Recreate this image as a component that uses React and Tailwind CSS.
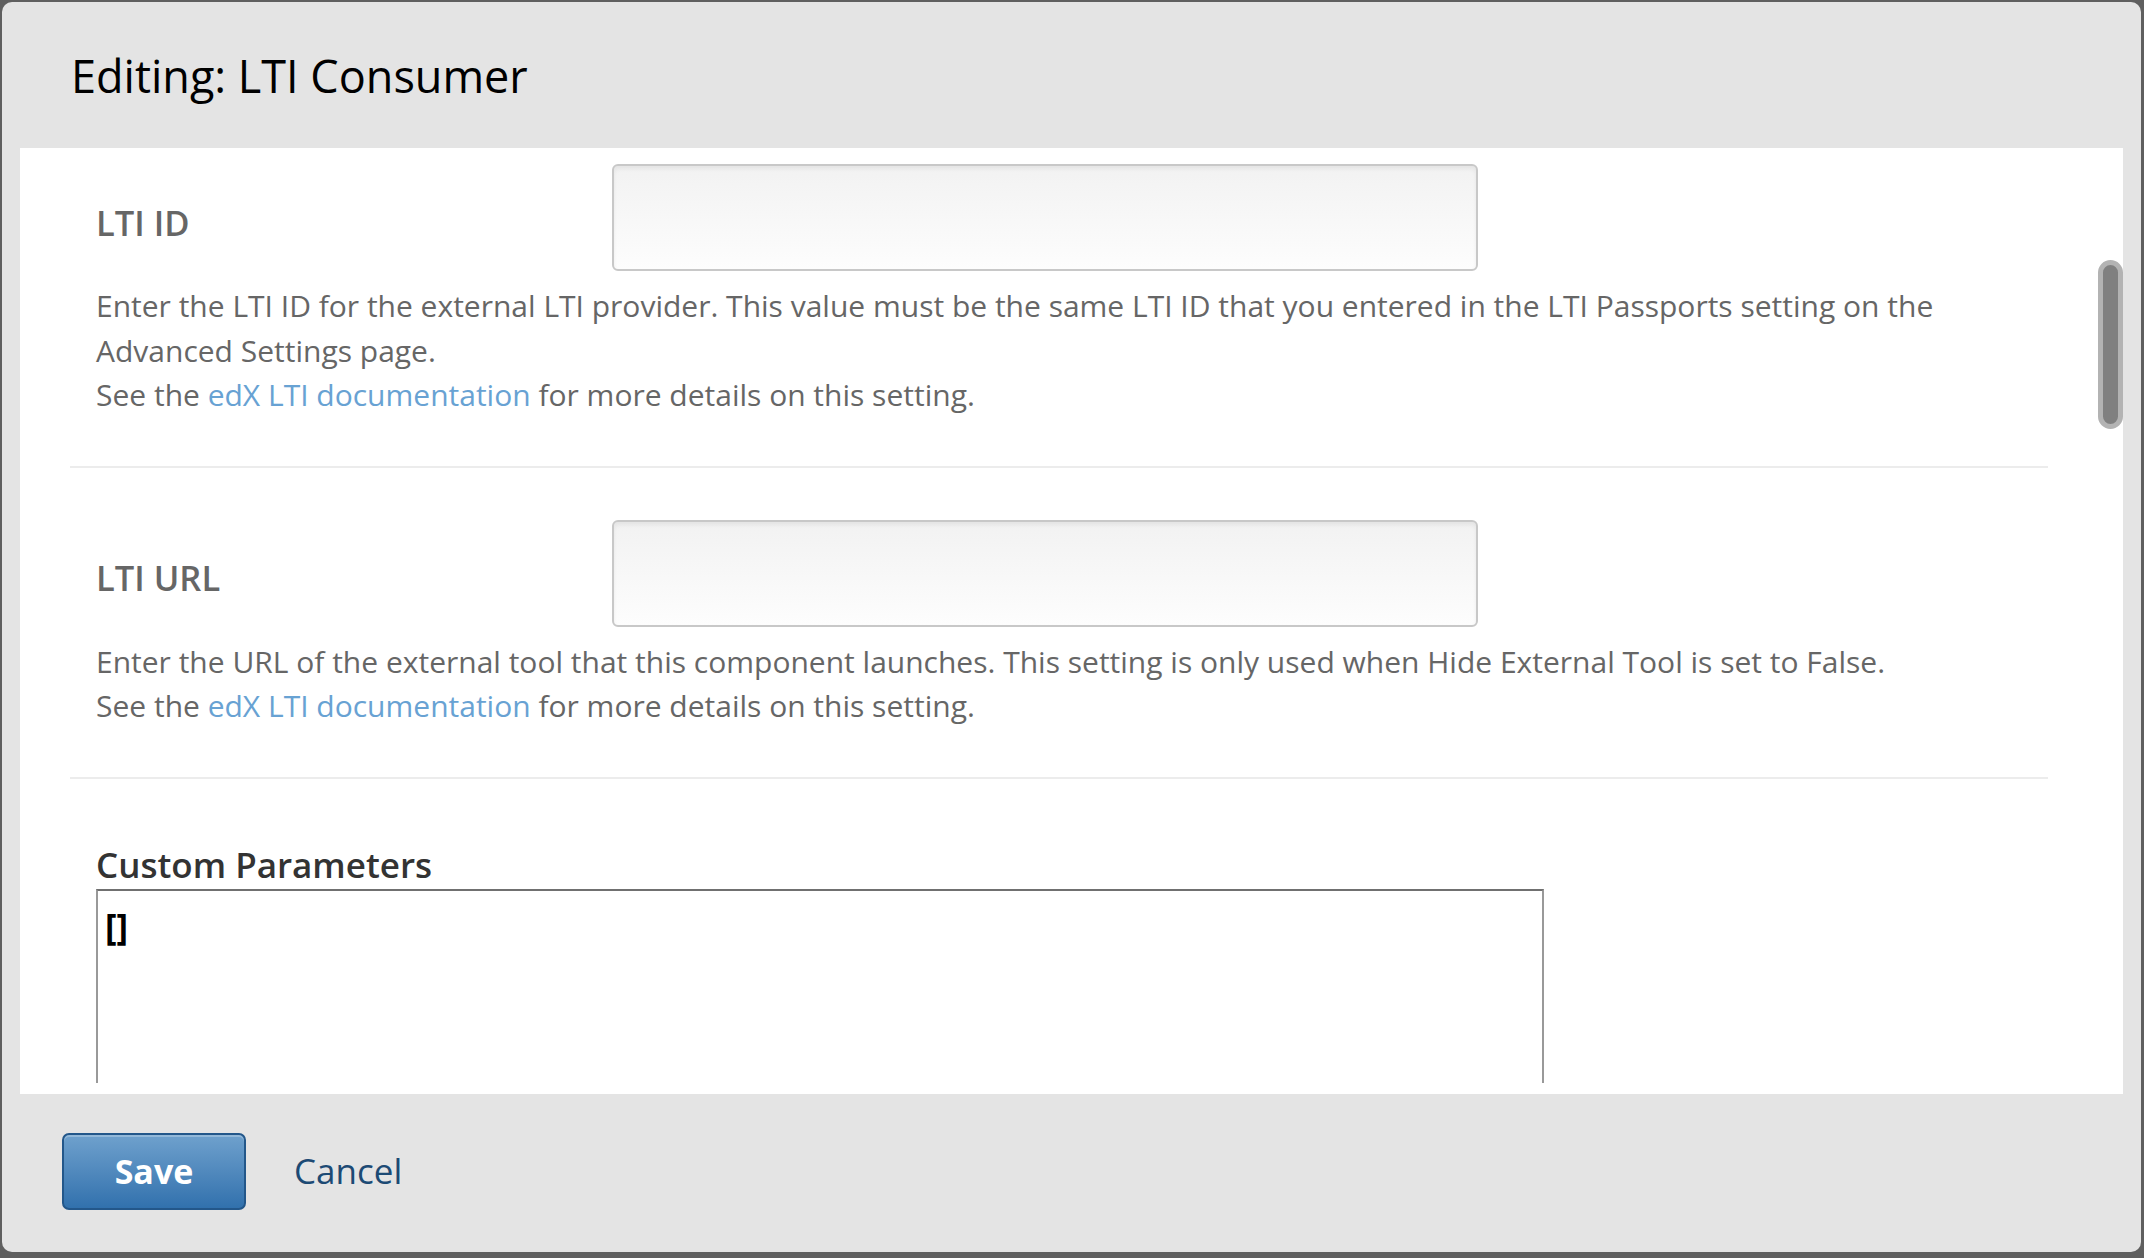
import React from 'react';

// Studio editor modal: LTI Consumer settings
const fields = [
  {
    label: 'LTI ID',
    help: 'Enter the LTI ID for the external LTI provider. This value must be the same LTI ID that you entered in the LTI Passports setting on the Advanced Settings page.',
  },
  {
    label: 'LTI URL',
    help: 'Enter the URL of the external tool that this component launches. This setting is only used when Hide External Tool is set to False.',
  },
];

const SettingRow = ({ label, help }) => (
  <li className="border-b-2 border-[#ececec] pl-[26px] pr-[40px] pt-[52px] pb-[48px] first:pt-[16px]">
    <div className="flex items-center">
      <label className="w-[516px] shrink-0 pt-[10px] text-[34.5px] font-semibold text-[#666]">{label}</label>
      <div className="h-[107px] w-[866px] rounded-[6px] border-2 border-[#c8c8c8] bg-gradient-to-b from-[#f2f2f2] to-[#fdfdfd] shadow-[inset_0_3px_4px_rgba(0,0,0,0.06)]" />
    </div>
    <p className="mt-[13px] text-[30px] leading-[44.5px] text-[#666]">
      {help}
      <br />
      See the <a className="text-[#68a2d3]">edX LTI documentation</a> for more details on this setting.
    </p>
  </li>
);

export default function App() {
  return (
    <div className="h-[1258px] w-[2144px] bg-[#5f5f5f] pt-[2px] pb-[6px] pl-[2px] pr-[3px]" style={{ fontFamily: '"Open Sans", sans-serif' }}>
      <div className="flex h-full flex-col rounded-[10px] bg-[#e4e4e4]">
        <header className="flex h-[146px] shrink-0 items-center pl-[69px] pt-[2px]">
          <h1 className="text-[45px] text-black">Editing: LTI Consumer</h1>
        </header>

        <div className="relative mx-[18px] h-[946px] shrink-0 bg-white pb-[11px]">
          <div className="h-full overflow-hidden pl-[50px] pr-[75px]">
            <ul>
              {fields.map((f) => (
                <SettingRow key={f.label} {...f} />
              ))}
            </ul>
            <div className="pl-[26px] pt-[63px]">
              <h3 className="text-[35px] font-semibold leading-[46px] text-[#333]">Custom Parameters</h3>
              <div className="mt-[1px] h-[300px] w-[1448px] border-x-2 border-t-2 border-x-[#999] border-t-[#707070] px-[7px] pt-[10px]">
                <span className="text-[35px] font-bold text-black">[]</span>
              </div>
            </div>
          </div>
          {/* overlay scrollbar */}
          <div className="absolute right-0 top-[112px] h-[169px] w-[25px] rounded-full border-[5px] border-[#b3b3b3] bg-[#808080]" />
        </div>

        <footer className="flex flex-1 items-center gap-[48px] pl-[60px] pb-[4px]">
          <button className="h-[77px] w-[184px] rounded-[7px] border-2 border-[#23578a] bg-gradient-to-b from-[#6fa1cd] to-[#3171ad] text-[34px] font-bold text-white shadow-[inset_0_2px_0_rgba(255,255,255,0.25)]">
            Save
          </button>
          <a className="text-[35px] text-[#1c4a74]">Cancel</a>
        </footer>
      </div>
    </div>
  );
}
